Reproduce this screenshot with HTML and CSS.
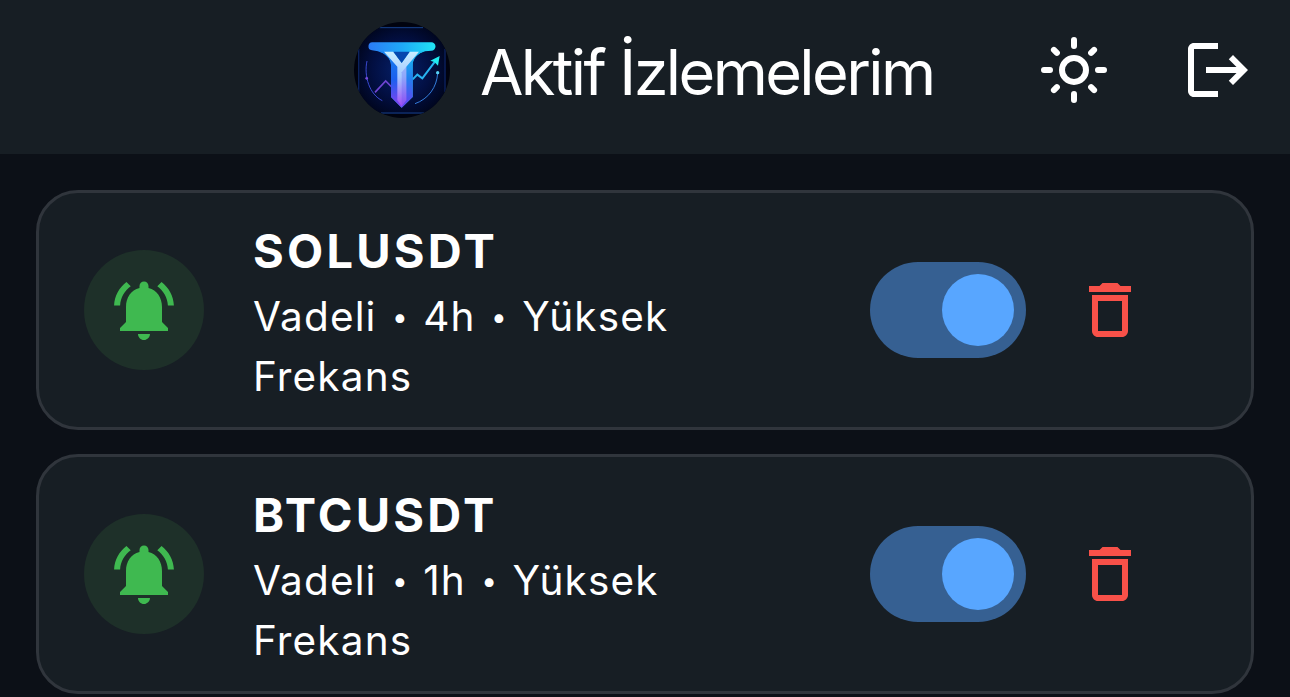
FILE: index.html
```html
<!DOCTYPE html>
<html lang="tr">
<head>
<meta charset="utf-8">
<title>Aktif İzlemelerim</title>
<link rel="stylesheet" href="styles.css">
</head>
<body>
<svg class="defs" width="0" height="0" aria-hidden="true">
  <symbol id="bell" viewBox="0 0 24 24"><path d="M7.58 4.08L6.15 2.65C3.75 4.48 2.17 7.3 2.03 10.5h2c.15-2.65 1.51-4.97 3.55-6.42zm12.39 6.42h2c-.15-3.2-1.73-6.02-4.12-7.85l-1.42 1.43c2.02 1.45 3.39 3.77 3.54 6.42zM18 11c0-3.07-1.64-5.64-4.5-6.32V4c0-.83-.67-1.5-1.5-1.5s-1.5.67-1.5 1.5v.68C7.63 5.36 6 7.92 6 11v5l-2 2v1h16v-1l-2-2v-5zm-6 11c.14 0 .27-.01.4-.04.65-.14 1.18-.58 1.44-1.18.1-.24.15-.5.15-.78h-4c.01 1.1.9 2 2.01 2z"/></symbol>
  <symbol id="trash" viewBox="0 0 24 24"><path d="M6 19c0 1.1.9 2 2 2h8c1.1 0 2-.9 2-2V7H6v12zM8 9h8v10H8V9zm7.5-5l-1-1h-5l-1 1H5v2h14V4z"/></symbol>
</svg>
<header class="app-bar">
  <svg class="logo" viewBox="29 29 288 288">
    <defs>
      <radialGradient id="disc" gradientUnits="userSpaceOnUse" cx="172" cy="172" r="146">
        <stop offset="0" stop-color="#05206a"/><stop offset=".6" stop-color="#020f42"/><stop offset="1" stop-color="#00061f"/>
      </radialGradient>
      <linearGradient id="bar" x1="0" x2="1"><stop offset="0" stop-color="#2b7bf6"/><stop offset=".5" stop-color="#1fa9f8"/><stop offset="1" stop-color="#20e4f4"/></linearGradient>
      <linearGradient id="stemLeft" x1="0" y1="0" x2="0" y2="1"><stop offset="0" stop-color="#1682ee"/><stop offset=".5" stop-color="#1c60ee"/><stop offset="1" stop-color="#8a3ff0"/></linearGradient>
      <linearGradient id="stemRight" x1="0" y1="0" x2="0" y2="1"><stop offset="0" stop-color="#18bdf0"/><stop offset=".5" stop-color="#247cf0"/><stop offset="1" stop-color="#6a3cf0"/></linearGradient>
      <linearGradient id="why" x1="0" y1="0" x2="0" y2="1"><stop offset="0" stop-color="#c9eeff"/><stop offset=".45" stop-color="#a5c8ff"/><stop offset="1" stop-color="#a14df5"/></linearGradient>
    </defs>
    <circle cx="173" cy="173" r="144" fill="#01030f"/>
    <clipPath id="round"><circle cx="173" cy="173" r="144"/></clipPath>
    <g clip-path="url(#round)" fill="none">
      <rect x="42" y="43" width="262" height="262" rx="12" fill="url(#disc)"/>
      <path d="M106 46H236M110 302H240" stroke="#1b4c9c" stroke-width="2.5"/>
      <path d="M43 110V240M302 110V240" stroke="#0b2260" stroke-width="4"/>
      <path d="M68 146C58 192 76 247 114 265" stroke="#3b4ad0" stroke-width="3"/>
      <path d="M280 181C278 225 252 260 212 274" stroke="#347ddc" stroke-width="3"/>
      <circle cx="67" cy="198" r="4" fill="#784cdc"/>
      <circle cx="280" cy="181" r="5" fill="#56cff5"/>
      <path d="M92 240L124 206L142 224" stroke="#7045d4" stroke-width="5"/>
      <path d="M205 201L219 187L234 198L274 145" stroke="#27b3ef" stroke-width="6"/>
      <path d="M286 131L258 145L270 149L281 160Z" fill="#22ecf0"/>
      <path d="M86 90H261A12 12 0 0 1 261 115L242 117C221 123 205 139 205 158V254L172 286L140 254V158C140 139 121 123 101 117L83 114A12 12 0 0 1 86 90Z" fill="url(#bar)"/>
      <path d="M101 117C126 122 140 139 140 158V254L172 286V178L125 118Z" fill="url(#stemLeft)"/>
      <path d="M242 117C219 122 205 139 205 158V254L172 286V178L219 118Z" fill="url(#stemRight)"/>
      <path d="M119 118H147L172 152L196 118H224L186 163V264L172 282L159 264V163Z" fill="url(#why)"/>
      <path d="M172 180V282L186 264V163Z" fill="#4a48ee" opacity=".25"/>
      <path d="M147 118H196L172 152Z" fill="#0647ae"/>
    </g>
  </svg>
  <h1 class="title">Aktif İzlemelerim</h1>
  <div class="actions">
    <svg class="icon" viewBox="0 0 24 24" fill="none" stroke="#fff" stroke-width="2" stroke-linecap="round">
      <circle cx="12" cy="12" r="4"/>
      <path d="M12 2v2M12 20v2M2 12h2M20 12h2M5.3 5.3l1 1M17.7 17.7l1 1M18.7 5.3l-1 1M6.3 17.7l-1 1"/>
    </svg>
    <svg class="icon" viewBox="0 0 24 24" fill="#fff"><path d="M17 7l-1.41 1.41L18.17 11H8v2h10.17l-2.58 2.58L17 17l5-5zM4 5h8V3H4c-1.1 0-2 .9-2 2v14c0 1.1.9 2 2 2h8v-2H4V5z"/></svg>
  </div>
</header>
<main class="list">
  <article class="card">
    <div class="badge"><svg class="icon"><use href="#bell"/></svg></div>
    <div class="info">
      <h2 class="symbol">SOLUSDT</h2>
      <p class="detail">Vadeli <span class="dot">•</span> 4h <span class="dot">•</span> Yüksek<br>Frekans</p>
    </div>
    <div class="switch"><span class="thumb"></span></div>
    <svg class="icon trash"><use href="#trash"/></svg>
  </article>
  <article class="card">
    <div class="badge"><svg class="icon"><use href="#bell"/></svg></div>
    <div class="info">
      <h2 class="symbol">BTCUSDT</h2>
      <p class="detail">Vadeli <span class="dot">•</span> 1h <span class="dot">•</span> Yüksek<br>Frekans</p>
    </div>
    <div class="switch"><span class="thumb"></span></div>
    <svg class="icon trash"><use href="#trash"/></svg>
  </article>
</main>
</body>
</html>
```
FILE: styles.css
```css
* { box-sizing: border-box; }
html, body { height: 697px; overflow: hidden; }
body { margin: 0; background: #0c1017; color: #fff; font-family: Inter, "Liberation Sans", sans-serif; }
.defs { display: block; }
.icon { display: block; width: 72px; height: 72px; flex: none; }
.app-bar { display: flex; align-items: center; height: 154px; padding: 0 36px 14px 354px; background: #171e24; }
.logo { width: 96px; height: 96px; flex: none; }
.title { margin: 3px 0 0 30px; font-size: 63px; line-height: 80px; font-weight: 400; letter-spacing: -2.6px; white-space: nowrap; }
.actions { display: flex; gap: 72px; margin-left: auto; }
.list { display: flex; flex-direction: column; gap: 24px; padding: 36px; }
.card { display: flex; align-items: center; height: 240px; flex: none; padding: 0 105px 0 45px; border: 3px solid #30353c; border-radius: 42px; background: #171e24; }
.badge { display: flex; align-items: center; justify-content: center; width: 120px; height: 120px; flex: none; border-radius: 50%; background: #1e3029; }
.badge .icon { fill: #3fb950; }
.info { margin: 8px 0 0 49px; flex: 1; white-space: nowrap; }
.symbol { margin: 0 0 6px; font-size: 47px; line-height: 60px; font-weight: 650; letter-spacing: 3.2px; }
.detail { margin: 0; font-size: 40.5px; line-height: 60px; font-weight: 400; letter-spacing: 1.15px; }
.dot { display: inline-block; width: 21.5px; font-size: 28px; line-height: 1; letter-spacing: 0; text-align: center; vertical-align: 4px; }
.switch { display: flex; align-items: center; justify-content: flex-end; width: 156px; height: 96px; flex: none; padding-right: 12px; border-radius: 48px; background: #366092; }
.thumb { width: 72px; height: 72px; border-radius: 50%; background: #58a6ff; }
.trash { margin-left: 48px; fill: #f85149; }
```
